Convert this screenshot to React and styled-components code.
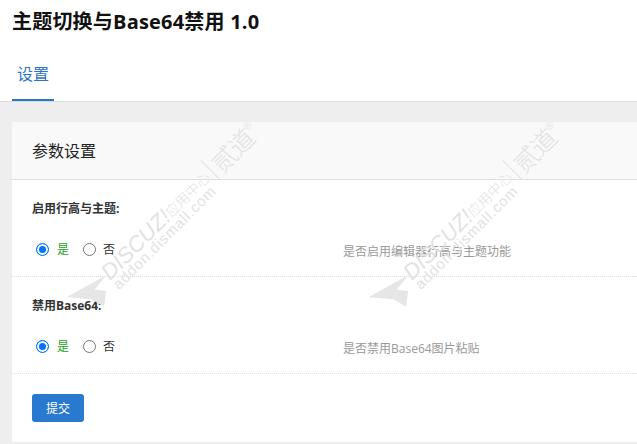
import React from 'react'
import styled, { createGlobalStyle } from 'styled-components'

const rows = [
  { label: '启用行高与主题:', hint: '是否启用编辑器行高与主题功能', name: 'theme' },
  { label: '禁用Base64:', hint: '是否禁用Base64图片粘贴', name: 'base64' },
]

const App = () => {
  return (
    <Page>
      <GlobalStyle />
      <Header>
        <Title>主题切换与Base64禁用 1.0</Title>
        <Tabs>
          <Tab>设置</Tab>
        </Tabs>
      </Header>
      <Body>
        <Card>
          <CardHead>参数设置</CardHead>
          {rows.map((row) => (
            <Row key={row.name}>
              <Label>{row.label}</Label>
              <Fields>
                <Options>
                  <Option>
                    <Radio $on />
                    <Yes>是</Yes>
                  </Option>
                  <Option>
                    <Radio />
                    <No>否</No>
                  </Option>
                </Options>
                <Hint>{row.hint}</Hint>
              </Fields>
            </Row>
          ))}
          <Footer>
            <Submit>提交</Submit>
          </Footer>
        </Card>
      </Body>
      <Mark $left={68} />
      <Mark $left={370} />
    </Page>
  )
}

const Mark = ({ $left }) => (
  <Stamp $left={$left}>
    <Arrow viewBox="0 0 40 30">
      <path d="M0 21 L38 0 L27 14 L38 15 L36 30 L24 23 Z" fill="#e6e6e6" />
    </Arrow>
    <StampText>
      <StampTop>
        <Brand>DISCUZ!</Brand>
        <Center>应用中心</Center>
        <Bar />
        <Owner>贰道</Owner>
        <Reg>®</Reg>
      </StampTop>
      <StampSub>addon.dismall.com</StampSub>
    </StampText>
  </Stamp>
)

const GlobalStyle = createGlobalStyle`
  html, body {
    margin: 0;
    padding: 0;
    background: #fff;
    overflow: hidden;
  }
  * {
    box-sizing: border-box;
  }
`

const Page = styled.div`
  position: relative;
  width: 637px;
  height: 444px;
  overflow: hidden;
  font-family: "Open Sans", "Noto Sans CJK SC", sans-serif;
  color: #333;
  background: #eee;
`

const Header = styled.div`
  background: #fff;
  height: 102px;
  padding: 0 12px;
  border-bottom: 1px solid #ddd;
`

const Title = styled.h1`
  margin: 0;
  height: 44px;
  line-height: 44px;
  font-size: 20px;
  font-weight: 700;
  letter-spacing: 0.2px;
  color: #111;
  white-space: nowrap;
`

const Tabs = styled.div`
  display: flex;
  height: 57px;
`

const Tab = styled.div`
  width: 42px;
  height: 57px;
  line-height: 61px;
  text-align: center;
  font-size: 16px;
  color: #2a75c7;
  border-bottom: 2px solid #2a75c7;
`

const Body = styled.div`
  padding: 20px 0 2px 12px;
`

const Card = styled.div`
  background: #fff;
`

const CardHead = styled.div`
  height: 58px;
  line-height: 59px;
  padding-left: 20px;
  font-size: 16px;
  color: #222;
  background: #f9f9f9;
  border-bottom: 1px solid #ddd;
`

const Row = styled.div`
  height: 97px;
  padding: 20px 20px 0;
  border-bottom: 1px dotted #ddd;
`

const Label = styled.div`
  height: 18px;
  line-height: 18px;
  font-size: 12px;
  font-weight: 700;
  color: #333;
`

const Fields = styled.div`
  display: flex;
  align-items: flex-start;
  margin-top: 22px;
`

const Options = styled.div`
  display: flex;
  width: 311px;
  padding-left: 4px;
  gap: 14px;
`

const Option = styled.div`
  display: flex;
  align-items: center;
  gap: 7px;
  height: 18px;
  font-size: 12px;
  &:first-child {
    gap: 8px;
  }
`

const Radio = styled.span`
  display: block;
  width: 13px;
  height: 13px;
  border-radius: 50%;
  border: 1px solid ${(p) => (p.$on ? '#0075ff' : '#767676')};
  background: ${(p) => (p.$on ? '#0075ff' : '#fff')};
  box-shadow: ${(p) => (p.$on ? 'inset 0 0 0 2px #fff' : 'none')};
`

const Yes = styled.span`
  color: #1aa51a;
`

const No = styled.span`
  color: #333;
`

const Hint = styled.div`
  margin-top: 3px;
  line-height: 18px;
  font-size: 12px;
  color: #999;
  white-space: nowrap;
`

const Footer = styled.div`
  padding: 20px;
`

const Submit = styled.button`
  display: block;
  width: 52px;
  height: 28px;
  padding: 0;
  border: 0;
  border-radius: 3px;
  background: #2a79d0;
  color: #fff;
  font-family: inherit;
  font-size: 12px;
`

const Stamp = styled.div`
  position: absolute;
  left: ${(p) => p.$left}px;
  top: 273px;
  display: flex;
  align-items: flex-start;
  transform: rotate(-45deg);
  transform-origin: 20px 20px;
  pointer-events: none;
  white-space: nowrap;
`

const Arrow = styled.svg`
  width: 42px;
  height: 32px;
  flex: none;
  transform: rotate(45deg);
  margin-top: 2px;
`

const StampText = styled.div`
  display: flex;
  flex-direction: column;
  margin-left: 2px;
  margin-top: 7px;
`

const StampTop = styled.div`
  display: flex;
  align-items: center;
  height: 26px;
  font-weight: 300;
  color: #e2e2e2;
`

const Brand = styled.span`
  font-family: "Liberation Sans", sans-serif;
  font-style: italic;
  font-weight: 400;
  font-size: 22px;
`

const Center = styled.span`
  font-size: 14px;
`

const Owner = styled.span`
  font-size: 25px;
  letter-spacing: -1px;
`

const Bar = styled.span`
  width: 1px;
  height: 28px;
  margin: 0 5px;
  background: #e0e0e0;
`

const Reg = styled.span`
  font-size: 10px;
  align-self: flex-start;
`

const StampSub = styled.div`
  margin-top: -6px;
  font-family: "Liberation Sans", sans-serif;
  font-size: 15px;
  line-height: 16px;
  color: #e2e2e2;
  letter-spacing: 0.8px;
`

export default App
